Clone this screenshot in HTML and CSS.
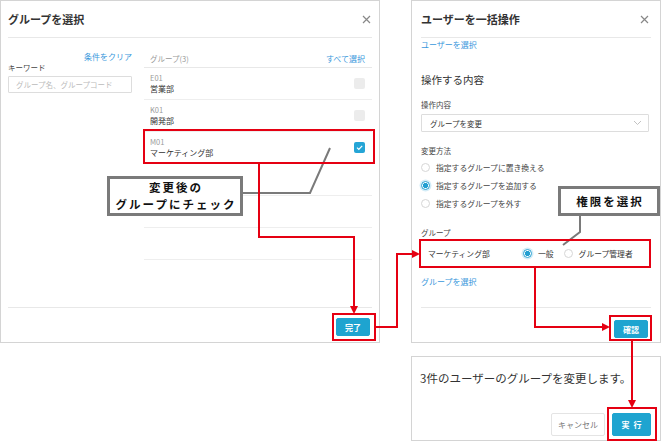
FILE: index.html
```html
<!DOCTYPE html>
<html lang="ja">

<head>
    <meta charset="UTF-8" />
    <meta name="viewport" content="width=device-width, initial-scale=1.0" />
    <title>ユーザーを一括操作</title>

    <link rel="stylesheet" href="styles.css">
</head>

<body>
    <main class="canvas">
        <!-- group picker -->
        <section class="dialog dialog-groups">
            <header class="dialog-head">
                <h2>グループを選択</h2>
                <svg class="close" width="9" height="9" viewBox="0 0 9 9"><path d="M1 1L8 8M8 1L1 8" /></svg>
            </header>
            <div class="dialog-body groups-body">
                <div class="filter">
                    <a class="link clear">条件をクリア</a>
                    <label class="field-label" for="keyword">キーワード</label>
                    <input class="text-input" type="text" id="keyword" placeholder="グループ名、グループコード" />
                </div>
                <div class="group-list">
                    <div class="list-head">
                        <span>グループ(3)</span>
                        <a class="link">すべて選択</a>
                    </div>
                    <div class="list-row">
                        <div>
                            <div class="code">E01</div>
                            <div class="name">営業部</div>
                        </div>
                        <span class="check"></span>
                    </div>
                    <div class="list-row">
                        <div>
                            <div class="code">K01</div>
                            <div class="name">開発部</div>
                        </div>
                        <span class="check"></span>
                    </div>
                    <div class="list-row">
                        <div>
                            <div class="code">M01</div>
                            <div class="name">マーケティング部</div>
                        </div>
                        <span class="check is-checked">
                            <svg width="11" height="11" viewBox="0 0 11 11"><path d="M3 5.6L4.8 7.4L8.2 3.8" /></svg>
                        </span>
                    </div>
                    <div class="list-row"></div>
                    <div class="list-row"></div>
                    <div class="list-row"></div>
                </div>
            </div>
            <footer class="dialog-foot">
                <button class="btn btn-primary">完了</button>
            </footer>
        </section>

        <!-- bulk edit -->
        <section class="dialog dialog-bulk">
            <header class="dialog-head">
                <h2>ユーザーを一括操作</h2>
                <svg class="close" width="9" height="9" viewBox="0 0 9 9"><path d="M1 1L8 8M8 1L1 8" /></svg>
            </header>
            <div class="dialog-body bulk-body">
                <a class="link pick-users">ユーザーを選択</a>
                <h3 class="section-title">操作する内容</h3>
                <div class="field-label op-label">操作内容</div>
                <div class="select">
                    <span>グループを変更</span>
                    <svg width="9" height="6" viewBox="0 0 9 6"><path d="M1 1L4.5 4.5L8 1" /></svg>
                </div>
                <div class="field-label method-label">変更方法</div>
                <ul class="radios">
                    <li><span class="radio"></span>指定するグループに置き換える</li>
                    <li><span class="radio is-on"></span>指定するグループを追加する</li>
                    <li><span class="radio"></span>指定するグループを外す</li>
                </ul>
                <div class="field-label group-label">グループ</div>
                <div class="group-row">
                    <span class="group-name">マーケティング部</span>
                    <span class="role"><span class="radio is-on"></span>一般</span>
                    <span class="role"><span class="radio"></span>グループ管理者</span>
                </div>
                <a class="link pick-group">グループを選択</a>
            </div>
            <footer class="dialog-foot">
                <button class="btn btn-primary">確認</button>
            </footer>
        </section>

        <!-- confirm -->
        <section class="dialog dialog-confirm">
            <p class="confirm-text">3件のユーザーのグループを変更します。</p>
            <div class="confirm-actions">
                <button class="btn btn-plain">キャンセル</button>
                <button class="btn btn-primary btn-run">実行</button>
            </div>
        </section>

        <!-- annotations -->
        <svg class="marks" width="661" height="442" viewBox="0 0 661 442">
            <g class="leader">
                <polyline points="243,193 310,193 330,148" />
                <polyline points="580,216 580,232 563,245" />
            </g>
            <g class="red">
                <rect x="144" y="130" width="230" height="33" />
                <rect x="333" y="314" width="42" height="26" />
                <rect x="420" y="240" width="230" height="27" />
                <rect x="610" y="316" width="41" height="24" />
                <rect x="608" y="408" width="48" height="32" />
                <polyline points="259,163 259,237 354,237 354,308" />
                <polyline points="375,327 397,327 397,254 413,254" />
                <polyline points="535,267 535,327 603,327" />
                <polyline points="632,340 632,401" />
            </g>
            <g class="heads">
                <polygon points="350,306 358,306 354,314" />
                <polygon points="412,250 412,258 420,254" />
                <polygon points="602,323 602,331 610,327" />
                <polygon points="628,400 636,400 632,408" />
            </g>
        </svg>

        <div class="callout callout-check">
            <span>変更後の</span>
            <span>グループにチェック</span>
        </div>
        <div class="callout callout-role"><span>権限を選択</span></div>
    </main>
</body>

</html>
```

FILE: styles.css
```css
* {
    margin: 0;
    padding: 0;
    box-sizing: border-box;
}

body {
    font-family: "Noto Sans CJK JP", "Noto Sans", sans-serif;
    color: #333;
    background: #fff;
}

.canvas {
    position: relative;
    width: 661px;
    height: 442px;
    overflow: hidden;
}

/**
* Dialogs
*/
.dialog {
    position: absolute;
    display: flex;
    flex-direction: column;
    background: #fff;
    border: 1px solid #d4d4d4;
}

.dialog-groups {
    left: 0;
    top: 0;
    width: 380px;
    height: 343px;
}

.dialog-bulk {
    left: 411px;
    top: 0;
    width: 250px;
    height: 343px;
}

.dialog-confirm {
    left: 411px;
    top: 356px;
    width: 250px;
    height: 85px;
    justify-content: space-between;
}

.dialog-head {
    display: flex;
    align-items: center;
    justify-content: space-between;
    height: 37px;
    margin: 0 7px;
    border-bottom: 1px solid #e8e8e8;

    h2 {
        font-size: 11px;
        font-weight: bold;
        color: #333;
    }

    .close {
        margin-right: 1px;
        stroke: #888;
        stroke-width: 1.2;
        fill: none;
    }
}

.dialog-bulk .dialog-head {
    margin: 0 9px;

    .close {
        margin-right: 2px;
    }
}

.dialog-body {
    flex: 1;
}

.dialog-foot {
    display: flex;
    justify-content: flex-end;
    align-items: flex-start;
    height: 35px;
    margin: 0 7px;
    padding: 10px 2px 0 0;
    border-top: 1px solid #e8e8e8;
}

.dialog-bulk .dialog-foot {
    margin: 0 9px;
    padding: 12px 3px 0 0;
}

.link {
    color: #3a98dc;
    font-size: 8px;
    cursor: pointer;
}

.field-label {
    display: block;
    font-size: 7.5px;
    color: #444;
}

.btn {
    font-family: inherit;
    font-size: 8px;
    border-radius: 2px;
    cursor: pointer;
}

.btn-primary {
    height: 18px;
    padding: 0 8px;
    color: #fff;
    font-weight: bold;
    background: #1ea4d0;
    border: 1px solid #1ea4d0;
}

.btn-plain {
    height: 23px;
    width: 54px;
    color: #777;
    background: #fff;
    border: 1px solid #e4e4e4;
}

/**
* Group picker
*/
.groups-body {
    display: flex;
    gap: 12px;
    margin: 0 7px;
    padding-top: 12px;
}

.filter {
    display: flex;
    flex-direction: column;
    width: 124px;

    .clear {
        align-self: flex-end;
        line-height: 13px;
    }

    .field-label {
        line-height: 10px;
    }
}

.text-input {
    height: 17px;
    margin-top: 3px;
    padding: 0 7px;
    font-family: inherit;
    font-size: 7.5px;
    border: 1px solid #ddd;
    border-radius: 1px;
}

.text-input::placeholder {
    color: #bbb;
}

.group-list {
    width: 228px;
}

.list-head {
    display: flex;
    align-items: center;
    justify-content: space-between;
    height: 18px;
    padding: 0 7px 1px 6px;
    border-bottom: 1px solid #e8e8e8;

    span {
        font-size: 7.5px;
        color: #999;
    }
}

.list-row {
    display: flex;
    align-items: center;
    justify-content: space-between;
    height: 32px;
    padding: 0 7px 0 6px;
    border-bottom: 1px solid #eee;

    .code {
        font-size: 7.5px;
        line-height: 11px;
        color: #9a9a9a;
    }

    .name {
        font-size: 8px;
        line-height: 12px;
    }
}

.check {
    width: 11px;
    height: 11px;
    border-radius: 2px;
    background: #ececec;

    svg {
        display: block;
        fill: none;
        stroke: #fff;
        stroke-width: 1.2;
    }
}

.check.is-checked {
    background: #25a5d6;
}

/**
* Bulk edit
*/
.bulk-body {
    display: flex;
    flex-direction: column;
    margin: 0 9px;

    .pick-users {
        line-height: 13px;
    }

    .section-title {
        margin-top: 20px;
        font-size: 10.5px;
        font-weight: normal;
        line-height: 18px;
    }

    .op-label {
        margin-top: 9px;
        line-height: 14px;
    }

    .method-label {
        margin-top: 12px;
        line-height: 14px;
    }

    .group-label {
        margin-top: 14px;
        line-height: 14px;
    }

    .pick-group {
        margin-top: 8px;
        line-height: 14px;
    }
}

.select {
    display: flex;
    align-items: center;
    justify-content: space-between;
    height: 18px;
    width: 228px;
    margin-top: 2px;
    padding: 0 6px 0 8px;
    font-size: 7.5px;
    border: 1px solid #ddd;
    border-radius: 1px;

    svg {
        fill: none;
        stroke: #bbb;
        stroke-width: 0.9;
    }
}

.radios {
    list-style: none;

    li {
        display: flex;
        align-items: center;
        gap: 6px;
        height: 18px;
        font-size: 7.8px;
        color: #444;
    }
}

.radio {
    display: inline-block;
    width: 9px;
    height: 9px;
    border-radius: 50%;
    border: 1px solid #d6d6d6;
    background: #fff;
}

.radio.is-on {
    border-color: #229fd1;
    background: radial-gradient(circle, #229fd1 0 2.4px, #fff 2.9px);
    box-shadow: 0 0 0 1.5px #d3ecf7;
}

.group-row {
    display: flex;
    align-items: center;
    height: 27px;
    padding-left: 7px;
    font-size: 7.8px;

    .group-name {
        width: 95px;
    }

    .role {
        display: flex;
        align-items: center;
        gap: 6px;
        margin-right: 10px;
    }
}

/**
* Confirm
*/
.confirm-text {
    padding: 13px 0 0 8px;
    font-size: 11.5px;
    line-height: 16px;
}

.confirm-actions {
    display: flex;
    justify-content: flex-end;
    gap: 7px;
    padding: 0 9px 4px 0;

    .btn-run {
        height: 23px;
        width: 39px;
        padding: 0;
        letter-spacing: 4px;
        text-indent: 4px;
    }
}

/**
* Annotations
*/
.marks {
    position: absolute;
    left: 0;
    top: 0;
    pointer-events: none;

    .leader polyline {
        fill: none;
        stroke: #7a7a7a;
        stroke-width: 2;
    }

    .red rect,
    .red polyline {
        fill: none;
        stroke: #e50012;
        stroke-width: 2;
    }

    .heads polygon {
        fill: #e50012;
    }
}

.callout {
    position: absolute;
    display: flex;
    flex-direction: column;
    align-items: center;
    justify-content: center;
    font-size: 11.5px;
    font-weight: bold;
    letter-spacing: 2px;
    color: #111;
    background: #fff;
    border: 3px solid #7a7a7a;

    span {
        display: block;
        line-height: 17px;
        text-indent: 2px;
    }
}

.callout-check {
    left: 107px;
    top: 176px;
    width: 136px;
    height: 40px;
}

.callout-role {
    left: 558px;
    top: 186px;
    width: 102px;
    height: 30px;
}
```
